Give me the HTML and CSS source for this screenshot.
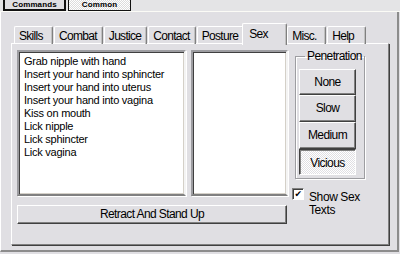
FILE: index.html
```
<!DOCTYPE html>
<html lang="en">
<head>
    <meta charset="UTF-8">
    <title>Sex</title>
    <link rel="stylesheet" href="styles.css">
</head>
<body>
    <div class="topbar">
        <span class="cmdtab">Commands</span>
        <span class="cmdtab active">Common</span>
    </div>
    <div class="window">
        <div class="tabs">
            <span class="tab">Skills</span>
            <span class="tab">Combat</span>
            <span class="tab">Justice</span>
            <span class="tab">Contact</span>
            <span class="tab">Posture</span>
            <span class="tab selected">Sex</span>
            <span class="tab">Misc.</span>
            <span class="tab">Help</span>
        </div>
        <div class="panel">
            <div class="left">
                <div class="lists">
                    <ul class="listbox actions">
                        <li>Grab nipple with hand</li>
                        <li>Insert your hand into sphincter</li>
                        <li>Insert your hand into uterus</li>
                        <li>Insert your hand into vagina</li>
                        <li>Kiss on mouth</li>
                        <li>Lick nipple</li>
                        <li>Lick sphincter</li>
                        <li>Lick vagina</li>
                    </ul>
                    <div class="listbox side"></div>
                </div>
                <button class="btn wide">Retract And Stand Up</button>
            </div>
            <div class="right">
                <fieldset class="group">
                    <legend>Penetration</legend>
                    <button class="btn speed">None</button>
                    <button class="btn speed">Slow</button>
                    <button class="btn speed">Medium</button>
                    <button class="btn speed pressed">Vicious</button>
                </fieldset>
                <label class="check">
                    <span class="box">&#10004;</span>
                    <span class="label">Show Sex<br>Texts</span>
                </label>
            </div>
        </div>
    </div>
</body>
</html>
```

FILE: styles.css
```
* {
    margin: 0;
    padding: 0;
    box-sizing: border-box;
}

body {
    width: 400px;
    height: 254px;
    overflow: hidden;
    background: #e0dfe3;
    color: #000;
    font: 11px/13px "Liberation Sans", Arial, sans-serif;
    letter-spacing: -0.25px;
}

.topbar {
    height: 12px;
    display: flex;
    padding-left: 3px;
    background: #e4e4e6;
    border-bottom: 1px solid #fbfbf6;
}

.cmdtab {
    width: 63px;
    height: 11px;
    display: flex;
    justify-content: center;
    align-items: center;
    border: 2px solid #111;
    border-top: 0;
    background: #e0dfe3;
    font: bold 8px/8px "Liberation Sans", Arial, sans-serif;
    letter-spacing: 0.1px;
}

.cmdtab + .cmdtab {
    margin-left: 2px;
    border-width: 0 1px 1px 1px;
}

.cmdtab.active {
    background: repeating-conic-gradient(#ffffff 0 25%, #dcdcdc 0 50%) 0 0 / 2px 2px;
}

.window {
    height: 240px;
    padding: 0 8px 0 10px;
    border-left: 1px solid #fff;
    border-right: 2px solid #8c8c8c;
    border-bottom: 2px solid #8c8c8c;
    margin-right: 1px;
}

.tabs {
    height: 31px;
    display: flex;
    align-items: flex-end;
    padding-left: 3px;
}

.tab {
    min-width: 39px;
    height: 18px;
    padding: 3px 5px 0 4px;
    margin-bottom: -1px;
    border: 1px solid #fff;
    border-bottom: 0;
    border-right: 1px solid #808080;
    border-radius: 2px 2px 0 0;
    box-shadow: inset -1px 0 0 #c0c0c0;
    font-size: 12px;
    line-height: 13px;
    letter-spacing: -0.7px;
    position: relative;
    z-index: 1;
}

.tab + .tab {
    margin-left: 1px;
}

.tab.selected {
    min-width: 45px;
    height: 22px;
    padding: 4px 5px 0 6px;
    margin: 0 -2px -2px;
    background: #e0dfe3;
    z-index: 2;
}

.tab.selected + .tab {
    margin-left: 2px;
}

.panel {
    height: 202px;
    display: flex;
    padding: 6px 0 0 5px;
    border: 1px solid #fff;
    border-right: 1px solid #808080;
    border-bottom: 1px solid #808080;
    box-shadow: 1px 1px 0 #404040;
}

.left {
    width: 272px;
}

.lists {
    display: flex;
    gap: 5px;
}

.listbox {
    height: 146px;
    background: #fff;
    border: 2px solid;
    border-color: #9d9da1 #f4f4f4 #808080 #9d9da1;
    box-shadow: inset 1px 1px 0 #404040, inset -1px -1px 0 #d4d0c8, 1px 1px 0 #fff;
    list-style: none;
}

.actions {
    width: 169px;
    padding: 3px 0 0 5px;
}

.side {
    width: 97px;
}

.btn {
    display: block;
    background: #e0dfe3;
    font: 12px/13px "Liberation Sans", Arial, sans-serif;
    letter-spacing: -0.6px;
    color: #000;
    border: 1px solid;
    border-color: #fff #404040 #404040 #fff;
    box-shadow: inset -1px -1px 0 #808080;
}

.wide {
    width: 270px;
    height: 19px;
    margin-top: 9px;
}

.right {
    padding-left: 3px;
}

.group {
    width: 69px;
    height: 129px;
    margin-left: 3px;
    padding: 6px 0 0 3px;
    border: 1px solid #9d9da1;
    box-shadow: 1px 1px 0 #fff, inset 1px 1px 0 #fff;
}

.group legend {
    margin-left: 6px;
    padding: 0 2px;
    font-size: 12px;
    letter-spacing: -0.6px;
}

.speed {
    width: 57px;
    height: 27px;
}

.speed:first-of-type {
    height: 26px;
}

.speed.pressed {
    height: 26px;
    border-color: #404040 #fff #fff #404040;
    box-shadow: inset 1px 1px 0 #808080;
    background: repeating-conic-gradient(#ffffff 0 25%, #e0dfe3 0 50%) 0 0 / 2px 2px;
    padding-top: 2px;
}

.check {
    display: flex;
    gap: 5px;
    margin-top: 9px;
    font-size: 12px;
    line-height: 13px;
    letter-spacing: -0.4px;
}

.box {
    width: 12px;
    height: 12px;
    flex: none;
    background: #fff;
    border: 1px solid;
    border-color: #808080 #fff #fff #808080;
    box-shadow: inset 1px 1px 0 #404040;
    font-size: 9px;
    line-height: 10px;
    text-align: center;
    font-family: "DejaVu Sans", sans-serif;
}

.label {
    padding-top: 3px;
}
```
